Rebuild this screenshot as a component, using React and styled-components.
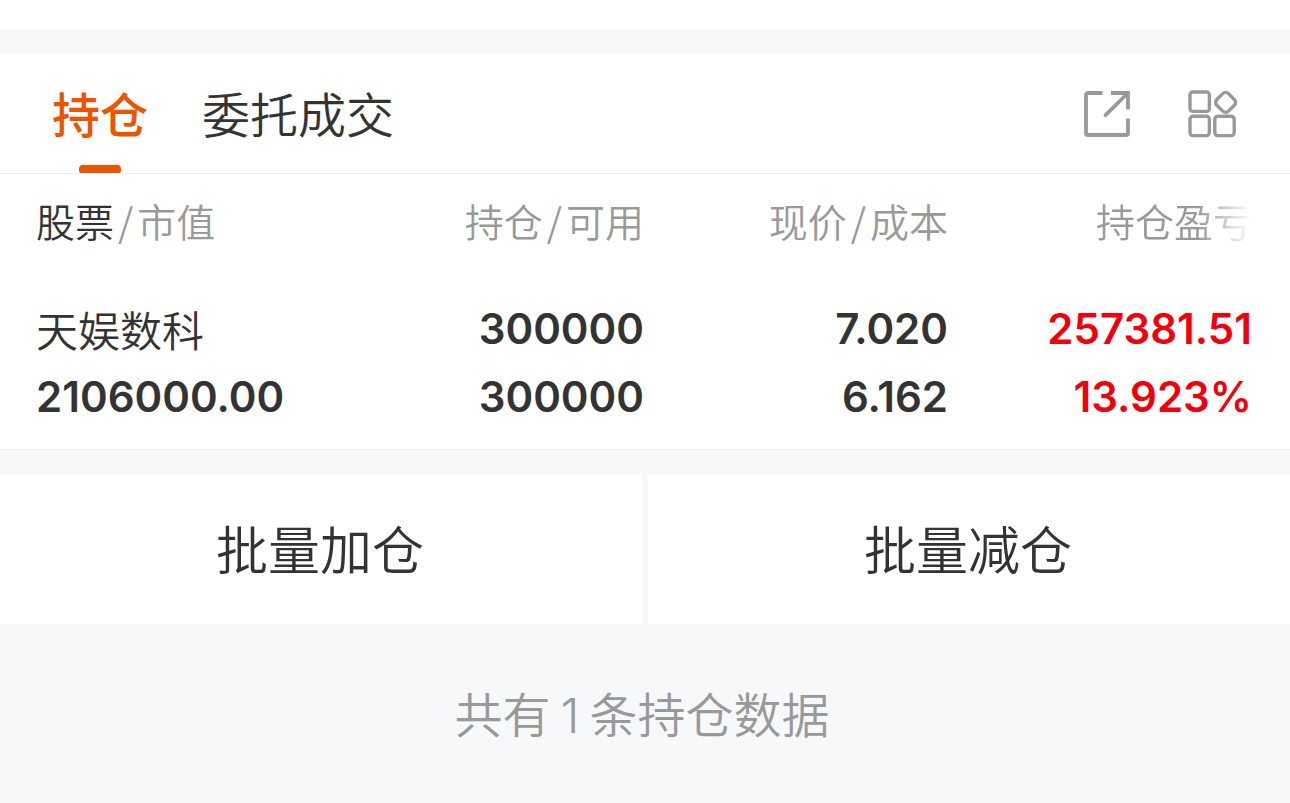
import styled, { createGlobalStyle } from "styled-components";
import { useState } from "react";

const tabs = [
  { key: "position", title: "持仓" },
  { key: "orders", title: "委托成交" },
];

const positions = [
  {
    name: "天娱数科",
    marketValue: "2106000.00",
    amount: "300000",
    available: "300000",
    price: "7.020",
    cost: "6.162",
    profit: "257381.51",
    profitRate: "13.923%",
  },
];

export default function App() {
  const [tabIndex, setTabIndex] = useState(0);

  return (
    <>
      <GlobalStyle />
      <STTopStrip />
      <STPanel>
        <STHeader>
          <STTabList role="tablist">
            {tabs.map((item, i) => (
              <STTab
                key={item.key}
                type="button"
                role="tab"
                aria-selected={tabIndex === i}
                className={tabIndex === i ? "select" : ""}
                onClick={() => setTabIndex(i)}
              >
                {item.title}
              </STTab>
            ))}
          </STTabList>
          <STTools>
            <STIconButton type="button" aria-label="分享">
              <ShareIcon />
            </STIconButton>
            <STIconButton type="button" aria-label="更多">
              <GridIcon />
            </STIconButton>
          </STTools>
        </STHeader>

        <STTableWrap>
          <STTable>
            <thead>
              <tr>
                <STTh scope="col">
                  <STStrong>股票</STStrong>
                  <STSlash>/</STSlash>市值
                </STTh>
                <STTh scope="col">
                  持仓<STSlash>/</STSlash>可用
                </STTh>
                <STTh scope="col">
                  现价<STSlash>/</STSlash>成本
                </STTh>
                <STTh scope="col">
                  <STFade>持仓盈亏</STFade>
                </STTh>
              </tr>
            </thead>
            <tbody>
              {positions.map((item) => (
                <tr key={item.name}>
                  <STTd>
                    <STName>{item.name}</STName>
                    <STNumber>{item.marketValue}</STNumber>
                  </STTd>
                  <STTd>
                    <STNumber>{item.amount}</STNumber>
                    <STNumber>{item.available}</STNumber>
                  </STTd>
                  <STTd>
                    <STNumber>{item.price}</STNumber>
                    <STNumber>{item.cost}</STNumber>
                  </STTd>
                  <STTd>
                    <STNumber $color="#f0000c">{item.profit}</STNumber>
                    <STNumber $color="#f0000c">{item.profitRate}</STNumber>
                  </STTd>
                </tr>
              ))}
            </tbody>
          </STTable>
        </STTableWrap>
      </STPanel>

      <STActions>
        <STAction type="button">批量加仓</STAction>
        <STAction type="button">批量减仓</STAction>
      </STActions>
      <STSummary>
        共有<STCount>{positions.length}</STCount>条持仓数据
      </STSummary>
    </>
  );
}

function ShareIcon() {
  return (
    <svg width="46" height="46" viewBox="0 0 46 46" fill="none" stroke="#999" strokeWidth="3.8">
      <path d="M18.5 2H4Q2 2 2 4V42Q2 44 4 44H42Q44 44 44 42V27.5" />
      <path d="M27 2H44V18.5" />
      <path d="M21.5 24.2L43 3" strokeLinecap="round" />
    </svg>
  );
}

function GridIcon() {
  return (
    <svg width="50" height="48" viewBox="0 0 50 48" fill="none" stroke="#999" strokeWidth="3.4">
      <rect x="2" y="2" width="19.4" height="19.4" rx="3" />
      <rect x="2" y="26.2" width="19.4" height="19.4" rx="3" />
      <rect x="26.8" y="26.2" width="19.4" height="19.4" rx="3" />
      <rect x="29.4" y="4.2" width="16.4" height="16.4" rx="4" transform="rotate(45 37.6 12.4)" />
    </svg>
  );
}

const GlobalStyle = createGlobalStyle`
  body {
    margin: 0;
    background-color: #f7f8fa;
    color: #333;
    font-family: Inter, "Noto Sans CJK SC", sans-serif;
    font-weight: 350;
  }
  button {
    margin: 0;
    padding: 0;
    border: 0;
    background: none;
    color: inherit;
    font: inherit;
    cursor: pointer;
  }
`;

const STTopStrip = styled.div`
  height: 30px;
  margin-bottom: 24px;
  background-color: white;
`;

const STPanel = styled.section`
  background-color: white;
  border-bottom: 1px solid #ebebeb;
`;

const STHeader = styled.header`
  display: flex;
  align-items: stretch;
  justify-content: space-between;
  height: 119px;
  padding: 0 52px;
  border-bottom: 1px solid #ebebeb;
`;

const STTabList = styled.div`
  display: flex;
  gap: 54px;
`;

const STTab = styled.button`
  position: relative;
  padding-top: 4px;
  font-size: 48px;
  line-height: 72px;
  &.select {
    color: #eb5500;
    font-weight: 500;
  }
  &.select::after {
    content: "";
    position: absolute;
    bottom: 0;
    left: 50%;
    width: 42px;
    height: 8px;
    margin-left: -21px;
    border-radius: 4px 4px 2px 2px;
    background-color: #eb5500;
  }
`;

const STTools = styled.div`
  display: flex;
  align-items: center;
  gap: 58px;
`;

const STIconButton = styled.button`
  display: flex;
`;

const STTableWrap = styled.div`
  padding: 0 38px 18px 36px;
`;

const STTable = styled.table`
  width: 100%;
  table-layout: fixed;
  border-collapse: collapse;
`;

const STTh = styled.th`
  height: 92px;
  padding: 0;
  color: #999;
  font-family: "Noto Sans CJK SC", sans-serif;
  font-size: 39px;
  font-weight: 350;
  line-height: 48px;
  text-align: right;
  white-space: nowrap;
  &:first-child {
    text-align: left;
  }
`;

const STStrong = styled.span`
  color: #333;
`;

const STSlash = styled.span`
  margin: 0 4px;
`;

const STFade = styled.span`
  mask-image: linear-gradient(to right, black 65%, transparent);
`;

const STTd = styled.td`
  padding: 29px 0 0;
  text-align: right;
  &:first-child {
    text-align: left;
  }
`;

const STName = styled.div`
  font-family: "Noto Sans CJK SC", sans-serif;
  font-size: 42px;
  line-height: 68px;
`;

const STNumber = styled.div`
  color: ${({ $color }) => $color || "#333"};
  font-size: 42px;
  font-weight: 600;
  line-height: 68px;
`;

const STActions = styled.div`
  display: grid;
  grid-template-columns: 1fr 1fr;
  gap: 6px;
  margin-top: 24px;
`;

const STAction = styled.button`
  height: 150px;
  padding: 0 2px 4px 0;
  background-color: white;
  font-size: 52px;
`;

const STSummary = styled.p`
  margin: 0;
  padding: 56px 6px 56px 0;
  color: #999;
  font-size: 48px;
  line-height: 72px;
  text-align: center;
`;

const STCount = styled.span`
  margin: 0 10px;
`;
